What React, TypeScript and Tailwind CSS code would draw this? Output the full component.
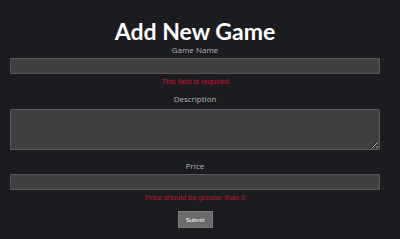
import React from "react";

export default function App() {
  return (
    <div
      className="min-h-[239px] w-full bg-[#1b1c20] flex flex-col"
      style={{ fontFamily: '"Open Sans", "Noto Sans", sans-serif' }}
    >
      <form className="w-full pl-[10px] pr-[20px] flex flex-col items-center">
        <h1
          className="mt-[19px] text-[23px] leading-[24px] font-bold text-white"
          style={{ fontFamily: 'Lato, "Open Sans", sans-serif' }}
        >
          Add New Game
        </h1>
        <label className="mt-[1px] text-[8px] leading-[12px] text-[#b4b4b4]">Game Name</label>
        <input className="mt-[2px] w-full h-[16px] bg-[#404040] border border-[#555] rounded-[1px] outline-none" />
        <p
          className="mt-[2px] text-[7.5px] leading-[12px] text-[#c8102e]"
          style={{ fontFamily: '"Liberation Sans", Arial, sans-serif' }}
        >
          This field is required
        </p>
        <label className="mt-[5px] text-[8px] leading-[12px] text-[#b4b4b4]">Description</label>
        <textarea className="mt-[4px] w-full h-[41px] bg-[#404040] border border-[#5a5a5a] rounded-[1px] outline-none" />
        <label className="mt-[10px] text-[8px] leading-[12px] text-[#b4b4b4]">Price</label>
        <input className="mt-[2px] w-full h-[16px] bg-[#404040] border border-[#555] rounded-[1px] outline-none" />
        <p
          className="mt-[2px] text-[7.5px] leading-[12px] text-[#c8102e]"
          style={{ fontFamily: '"Liberation Sans", Arial, sans-serif' }}
        >
          Price should be greater than 0
        </p>
        <button
          type="button"
          className="mt-[7px] w-[35px] h-[17px] bg-[#6b6b6b] border border-[#7a7a7a] text-white text-[6px] leading-none"
          style={{ fontFamily: '"Liberation Sans", Arial, sans-serif' }}
        >
          Submit
        </button>
      </form>
    </div>
  );
}
